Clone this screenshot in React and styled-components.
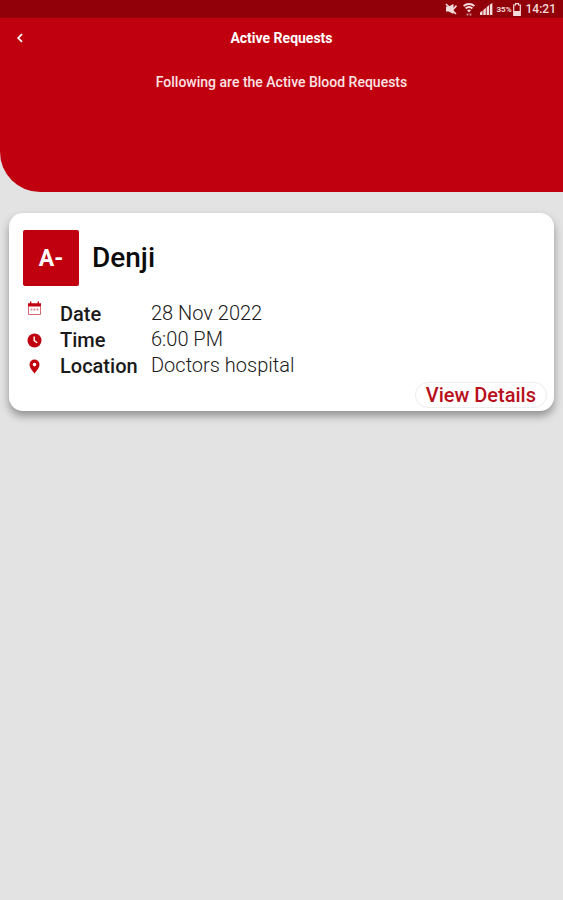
import React from "react";
import styled, { createGlobalStyle } from "styled-components";

const GlobalStyle = createGlobalStyle`
  * {
    box-sizing: border-box;
  }
  body {
    margin: 0;
    background-color: #e3e3e3;
    font-family: Roboto, "Liberation Sans", sans-serif;
  }
`;

const StatusBar = styled.div`
  height: 18px;
  padding: 0 7px;
  display: flex;
  justify-content: flex-end;
  align-items: center;
  background-color: #910008;
  color: #f3dcdc;
`;

const StatusIcon = styled.svg`
  display: block;
  margin-right: ${props => props.$gap || 0}px;
`;

const Battery = styled.span`
  font-size: 8px;
  font-weight: bold;
  margin-right: 1px;
`;

const Clock = styled.span`
  font-size: 12px;
  line-height: 18px;
  font-weight: 500;
`;

const Header = styled.header`
  height: 174px;
  background-color: #c1000f;
  border-bottom-left-radius: 40px;
  color: white;
  text-align: center;
`;

const TitleRow = styled.div`
  display: grid;
  grid-template-columns: 40px 1fr 40px;
  align-items: center;
  height: 40px;
`;

const BackBtn = styled.button`
  display: flex;
  justify-content: center;
  padding: 10px;
  border: none;
  background: none;
  color: white;
  cursor: pointer;
`;

const Title = styled.h1`
  margin: 0;
  font-size: 14px;
  line-height: 20px;
  font-weight: bold;
`;

const Subtitle = styled.p`
  margin: 14px 0 0;
  font-size: 14px;
  line-height: 20px;
  font-weight: 500;
  color: #fbe3e4;
`;

const Card = styled.article`
  margin: 21px 9px;
  padding: 17px 7px 3px 14px;
  background-color: white;
  border-radius: 14px;
  box-shadow: 0 5px 8px rgba(0, 0, 0, 0.36);
`;

const CardHeader = styled.div`
  display: flex;
  align-items: center;
`;

const BloodGroup = styled.div`
  width: 56px;
  height: 56px;
  display: flex;
  justify-content: center;
  align-items: center;
  border-radius: 2px;
  background-color: #c1000f;
  color: white;
  font-size: 23px;
  font-weight: bold;
`;

const Name = styled.h2`
  margin: 0 0 0 13px;
  font-size: 28px;
  line-height: 36px;
  font-weight: 500;
  color: #0c0c0c;
`;

const Details = styled.dl`
  margin: 15px 0 0;
`;

const DetailRow = styled.div`
  display: grid;
  grid-template-columns: 23px 105px 1fr;
  align-items: center;
  height: 26px;
`;

const DetailIcon = styled.svg`
  display: block;
  align-self: ${props => props.$align || "center"};
  margin-left: 4px;
`;

const Label = styled.dt`
  padding-left: 14px;
  font-size: 20px;
  line-height: 26px;
  font-weight: 500;
  color: #1a1a1a;
`;

const Value = styled.dd`
  margin: 0;
  align-self: start;
  font-size: 20px;
  line-height: 24px;
  font-weight: 300;
  color: #1a1a1a;
`;

const CardFooter = styled.div`
  display: flex;
  justify-content: flex-end;
  margin-top: 3px;
`;

const DetailsBtn = styled.button`
  height: 26px;
  padding: 0 10px;
  border: 1px solid #ededed;
  border-radius: 13px;
  background-color: white;
  color: #b8101c;
  font-family: inherit;
  font-size: 20px;
  line-height: 24px;
  font-weight: 500;
  cursor: pointer;
`;

const icons = {
  date: (
    <DetailIcon
      $align="start"
      width="15"
      height="15"
      viewBox="0 0 15 15"
      aria-hidden="true"
    >
      <path
        fill="#c1000f"
        d="M1 2.2h2V.6h1.4v1.6h6.2V.6H12v1.6h2v3.4H1z"
      />
      <path
        fill="none"
        stroke="#d56a72"
        strokeWidth="1"
        d="M1.5 5v8.5h12V5"
      />
      <path
        fill="#dc8a90"
        d="M3.6 7.6h1.8v1.8H3.6zM6.6 7.6h1.8v1.8H6.6zM9.6 7.6h1.8v1.8H9.6z"
      />
    </DetailIcon>
  ),
  time: (
    <DetailIcon width="15" height="15" viewBox="0 0 15 15" aria-hidden="true">
      <circle cx="7.5" cy="7.5" r="7" fill="#c1000f" />
      <path fill="none" stroke="white" strokeWidth="1.4" d="M7.2 3.6v4l3 2.2" />
    </DetailIcon>
  ),
  location: (
    <DetailIcon width="15" height="15" viewBox="0 0 15 15" aria-hidden="true">
      <path
        fill="#c1000f"
        fillRule="evenodd"
        d="M7.5.6a5 5 0 0 0-5 5c0 3.6 5 9 5 9s5-5.4 5-9a5 5 0 0 0-5-5zm0 3.2a1.8 1.8 0 1 1 0 3.6 1.8 1.8 0 0 1 0-3.6z"
      />
    </DetailIcon>
  )
};

const requests = [
  {
    name: "Denji",
    group: "A-",
    details: [
      { icon: "date", label: "Date", value: "28 Nov 2022" },
      { icon: "time", label: "Time", value: "6:00 PM" },
      { icon: "location", label: "Location", value: "Doctors hospital" }
    ]
  }
];

function Status() {
  return (
    <StatusBar>
      <StatusIcon $gap={6} width="12" height="12" viewBox="0 0 12 12">
        <path fill="currentColor" d="M1 3.5h2.5L8.5 1v10l-5-2.5H1z" />
        <path
          stroke="currentColor"
          strokeWidth="1.6"
          d="M1 1l10 10M8 6.5L11.5 2.5"
        />
      </StatusIcon>
      <StatusIcon $gap={5} width="12" height="14" viewBox="0 0 12 14">
        <path
          fill="none"
          stroke="currentColor"
          strokeWidth="2"
          d="M.6 4c3-2.8 7.8-2.8 10.8 0M2.6 6.4c2-1.7 4.8-1.7 6.8 0"
        />
        <path fill="currentColor" d="M4 8.2c1.2-.9 2.8-.9 4 0L6 10.6z" />
        <path fill="currentColor" opacity="0.6" d="M3.5 11.5h2v2h-2zM6.5 11.5h2v2h-2z" />
      </StatusIcon>
      <StatusIcon $gap={3} width="13" height="12" viewBox="0 0 13 12">
        <path
          fill="currentColor"
          d="M0 9.5l2.5-2V12H0zM3.3 7l2.5-2.2V12H3.3zM6.6 4.2L9.1 2v10H6.6zM9.9 1.6L12.4 0v12H9.9z"
        />
      </StatusIcon>
      <Battery>35%</Battery>
      <StatusIcon $gap={5} width="8" height="13" viewBox="0 0 8 13">
        <path
          fill="none"
          stroke="currentColor"
          strokeWidth="1.2"
          d="M2.5 2V.7h3V2h1.8v10.3H.7V2z"
        />
        <path fill="currentColor" d="M1 8h6v4H1z" />
      </StatusIcon>
      <Clock>14:21</Clock>
    </StatusBar>
  );
}

function RequestCard({ name, group, details }) {
  return (
    <Card>
      <CardHeader>
        <BloodGroup>{group}</BloodGroup>
        <Name>{name}</Name>
      </CardHeader>
      <Details>
        {details.map(item => (
          <DetailRow key={item.label}>
            {icons[item.icon]}
            <Label>{item.label}</Label>
            <Value>{item.value}</Value>
          </DetailRow>
        ))}
      </Details>
      <CardFooter>
        <DetailsBtn type="button">View Details</DetailsBtn>
      </CardFooter>
    </Card>
  );
}

export default function App() {
  return (
    <>
      <GlobalStyle />
      <Status />
      <Header>
        <TitleRow>
          <BackBtn type="button" aria-label="Back">
            <svg width="8" height="10" viewBox="0 0 8 10">
              <path
                fill="none"
                stroke="currentColor"
                strokeWidth="1.7"
                d="M6 1.2L2.2 5 6 8.8"
              />
            </svg>
          </BackBtn>
          <Title>Active Requests</Title>
        </TitleRow>
        <Subtitle>Following are the Active Blood Requests</Subtitle>
      </Header>
      <main>
        {requests.map(request => (
          <RequestCard key={request.name} {...request} />
        ))}
      </main>
    </>
  );
}
